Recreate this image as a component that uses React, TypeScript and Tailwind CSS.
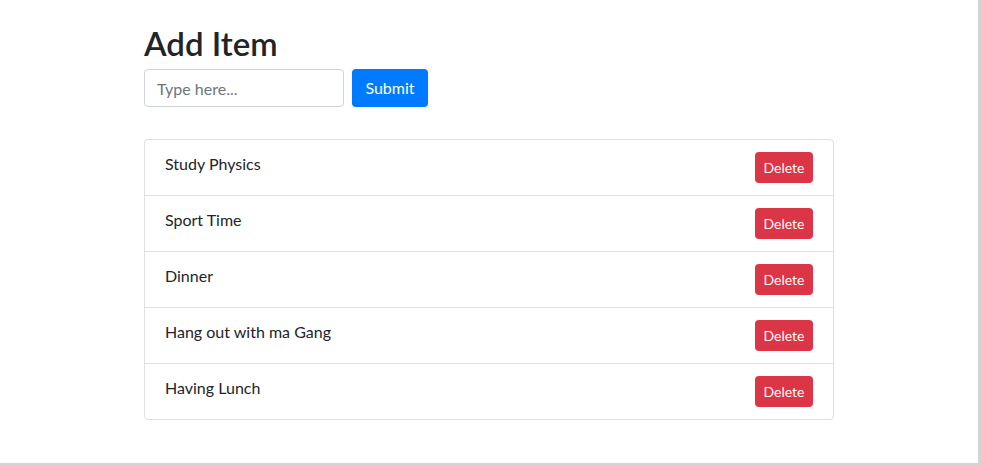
const items = ['Study Physics', 'Sport Time', 'Dinner', 'Hang out with ma Gang', 'Having Lunch'];

export default function App() {
  return (
    <div className="w-[981px] h-[466px] bg-white border-r-[3px] border-b-[3px] border-[#d4d4d4] font-['Lato',sans-serif] text-[#212529]">
      <div className="pl-[144px] pt-[23px]">
        <h1 className="text-[33px] leading-[40px] font-semibold mb-[6px]">Add Item</h1>
        <form className="flex gap-2" onSubmit={(e) => e.preventDefault()}>
          <input
            type="text"
            placeholder="Type here..."
            className="w-[200px] h-[38px] px-3 border border-[#ced4da] rounded text-base placeholder:text-[#6c757d] outline-none"
          />
          <button type="submit" className="h-[38px] w-[76px] rounded bg-[#007bff] text-white text-base">
            Submit
          </button>
        </form>
        <ul className="w-[690px] mt-[32px] border border-[#dfdfdf] rounded">
          {items.map((item, i) => (
            <li
              key={item}
              className={`flex items-start justify-between py-3 pl-5 pr-5 ${i > 0 ? 'border-t border-[#dfdfdf]' : ''}`}
            >
              <span className="text-base leading-6">{item}</span>
              <button className="h-[31px] w-[58px] rounded bg-[#dc3545] text-white text-sm">Delete</button>
            </li>
          ))}
        </ul>
      </div>
    </div>
  );
}
